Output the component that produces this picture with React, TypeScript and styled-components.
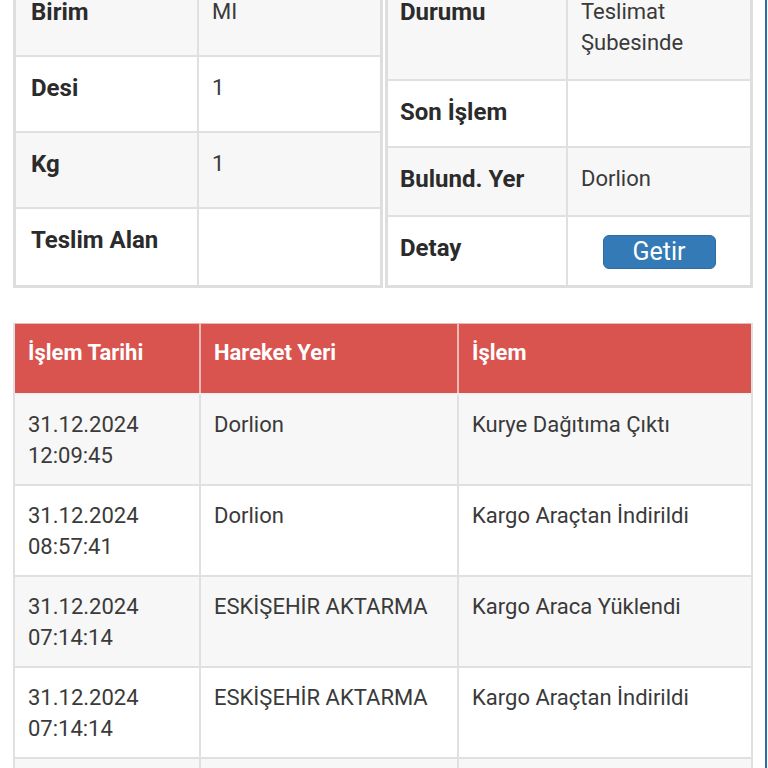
import React from "react";
import styled, { createGlobalStyle } from "styled-components";

const GlobalStyle = createGlobalStyle`
  html, body {
    margin: 0;
    padding: 0;
    background: #ffffff;
  }
  body {
    font-family: Roboto, "Noto Sans", "Liberation Sans", sans-serif;
    color: #333333;
    overflow: hidden;
  }
`;

const Page = styled.div`
  box-sizing: border-box;
  width: 767px;
  margin-top: -22px;
  padding: 0 12px 0 13px;
  border-right: 2px solid #2c6cb0;
  min-height: 800px;
`;

const TopGrid = styled.div`
  display: grid;
  grid-template-columns: 370px 1fr;
  gap: 2px;
`;

const InfoTable = styled.div`
  display: flex;
  flex-direction: column;
  border: 3px solid #dedede;
  background: #ffffff;
`;

const InfoRow = styled.div<{ $h: number; $striped: boolean; $labelW: number }>`
  display: grid;
  grid-template-columns: ${(p) => p.$labelW}px 1fr;
  height: ${(p) => p.$h}px;
  box-sizing: border-box;
  background: ${(p) => (p.$striped ? "#f7f7f7" : "#ffffff")};
  border-bottom: 2px solid #e0e0e0;
  &:last-child {
    border-bottom: none;
  }
`;

const LabelCell = styled.div<{ $pad: number }>`
  padding: 19px 8px 0 ${(p) => p.$pad}px;
  border-right: 2px solid #e0e0e0;
  font-weight: 700;
  font-size: 24px;
  line-height: 24px;
  color: #2b2b2b;
  white-space: nowrap;
`;

const ValueCell = styled.div<{ $center?: boolean }>`
  padding: ${(p) => (p.$center ? "0" : "15px 12px 0 13px")};
  font-size: 22px;
  line-height: 31px;
  color: #3a3a3a;
  display: ${(p) => (p.$center ? "flex" : "block")};
  align-items: center;
  justify-content: center;
`;

const GetirButton = styled.button`
  width: 113px;
  height: 34px;
  border: 1px solid #2e6da4;
  border-radius: 6px;
  background: #337ab7;
  color: #ffffff;
  font-family: Roboto, "Noto Sans", sans-serif;
  font-size: 25px;
  line-height: 30px;
  padding: 0;
  margin-top: 2px;
  cursor: pointer;
`;

const MoveTable = styled.div`
  margin-top: 35px;
  border: 2px solid #e0e0e0;
  border-top: none;
  display: flex;
  flex-direction: column;
`;

const MoveRow = styled.div<{ $head?: boolean; $striped?: boolean }>`
  display: grid;
  grid-template-columns: 184px 258px 1fr;
  box-sizing: border-box;
  height: ${(p) => (p.$head ? 72 : 91)}px;
  background: ${(p) => (p.$head ? "#d9534f" : p.$striped ? "#f7f7f7" : "#ffffff")};
  border-bottom: ${(p) => (p.$head ? "2px solid #f1f1f1" : "2px solid #e0e0e0")};
  border-top: ${(p) => (p.$head ? "1px solid #eeb5b3" : "none")};
`;

const HeadCell = styled.div`
  padding: 13px 12px 0 13px;
  font-weight: 700;
  font-size: 22px;
  line-height: 31px;
  color: #ffffff;
  & + & {
    border-left: 2px solid #f0b8b6;
  }
`;

const BodyCell = styled.div`
  padding: 14px 12px 0 13px;
  font-size: 22px;
  line-height: 31px;
  color: #3a3a3a;
  & + & {
    border-left: 2px solid #e0e0e0;
  }
`;

type Info = { label: string; value?: string; h: number; button?: boolean };

const leftInfo: Info[] = [
  { label: "Birim", value: "MI", h: 76 },
  { label: "Desi", value: "1", h: 76 },
  { label: "Kg", value: "1", h: 76 },
  { label: "Teslim Alan", value: "", h: 76 },
];

const rightInfo: Info[] = [
  { label: "Durumu", value: "Teslimat Şubesinde", h: 100 },
  { label: "Son İşlem", value: "", h: 67 },
  { label: "Bulund. Yer", value: "Dorlion", h: 69 },
  { label: "Detay", button: true, h: 68 },
];

type Move = { date: string; time: string; place: string; action: string };

const moves: Move[] = [
  { date: "31.12.2024", time: "12:09:45", place: "Dorlion", action: "Kurye Dağıtıma Çıktı" },
  { date: "31.12.2024", time: "08:57:41", place: "Dorlion", action: "Kargo Araçtan İndirildi" },
  { date: "31.12.2024", time: "07:14:14", place: "ESKİŞEHİR AKTARMA", action: "Kargo Araca Yüklendi" },
  { date: "31.12.2024", time: "07:14:14", place: "ESKİŞEHİR AKTARMA", action: "Kargo Araçtan İndirildi" },
  { date: "", time: "", place: "", action: "" },
];

function InfoBlock({ rows, labelW, pad }: { rows: Info[]; labelW: number; pad: number }) {
  return (
    <InfoTable>
      {rows.map((r, i) => (
        <InfoRow key={r.label} $h={r.h} $striped={i % 2 === 0} $labelW={labelW}>
          <LabelCell $pad={pad}>{r.label}</LabelCell>
          {r.button ? (
            <ValueCell $center>
              <GetirButton type="button">Getir</GetirButton>
            </ValueCell>
          ) : (
            <ValueCell>{r.value}</ValueCell>
          )}
        </InfoRow>
      ))}
    </InfoTable>
  );
}

export default function App() {
  return (
    <>
      <GlobalStyle />
      <Page>
        <TopGrid>
          <InfoBlock rows={leftInfo} labelW={183} pad={15} />
          <InfoBlock rows={rightInfo} labelW={180} pad={12} />
        </TopGrid>
        <MoveTable>
          <MoveRow $head>
            <HeadCell>İşlem Tarihi</HeadCell>
            <HeadCell>Hareket Yeri</HeadCell>
            <HeadCell>İşlem</HeadCell>
          </MoveRow>
          {moves.map((m, i) => (
            <MoveRow key={i} $striped={i % 2 === 0}>
              <BodyCell>
                {m.date}
                {m.time && <br />}
                {m.time}
              </BodyCell>
              <BodyCell>{m.place}</BodyCell>
              <BodyCell>{m.action}</BodyCell>
            </MoveRow>
          ))}
        </MoveTable>
      </Page>
    </>
  );
}
